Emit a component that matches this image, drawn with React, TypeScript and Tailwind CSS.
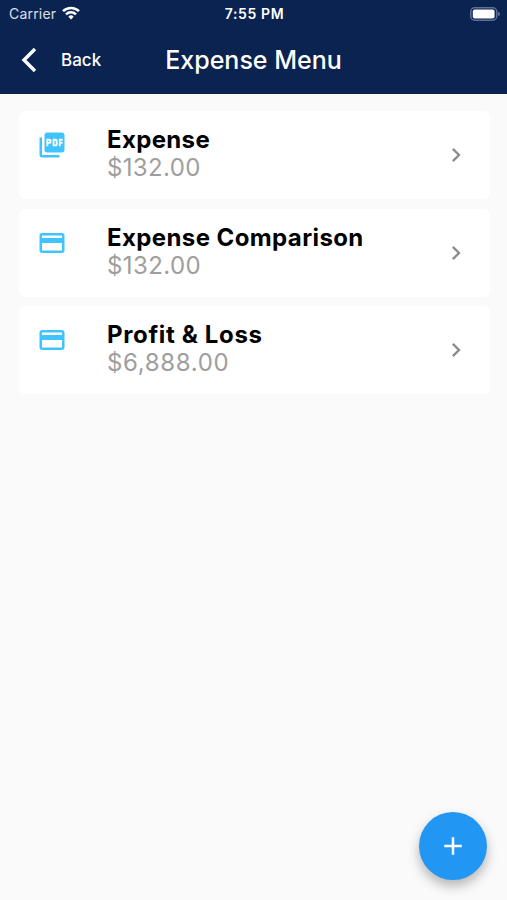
import React from 'react';
import { MdPictureAsPdf, MdCreditCard, MdChevronRight, MdAdd } from 'react-icons/md';
import type { IconType } from 'react-icons';

interface MenuItem {
  title: string;
  amount: string;
  icon: IconType;
  textClass: string;
}

const items: MenuItem[] = [
  { title: 'Expense', amount: '$132.00', icon: MdPictureAsPdf, textClass: 'tracking-[0.35px]' },
  { title: 'Expense Comparison', amount: '$132.00', icon: MdCreditCard, textClass: 'tracking-[0.4px]' },
  { title: 'Profit & Loss', amount: '$6,888.00', icon: MdCreditCard, textClass: 'tracking-[0.65px]' },
];

function StatusBar() {
  return (
    <div className="h-[27px] grid grid-cols-3 items-center pl-[9px] pr-[7px] text-[14px]">
      <div className="flex items-center gap-[6px]">
        <span className="tracking-[0.2px] text-white/85">Carrier</span>
        <svg className="mb-[2px]" width="18" height="14" viewBox="0 0 18 14" fill="none" stroke="white" strokeWidth="2.5">
          <path d="M1 5.2a11.3 11.3 0 0 1 16 0" />
          <path d="M4 8.4a7 7 0 0 1 10 0" />
          <path d="M9 13.5l-2.7-2.8a3.8 3.8 0 0 1 5.4 0z" fill="white" stroke="none" />
        </svg>
      </div>
      <span className="text-center font-semibold tracking-[0.6px] whitespace-nowrap">7:55 PM</span>
      <svg className="justify-self-end" width="30" height="14" viewBox="0 0 30 14" fill="none">
        <rect x="0.75" y="0.75" width="26" height="12.5" rx="4" stroke="#5f6f95" strokeWidth="1.5" />
        <rect x="2.8" y="2.5" width="21.8" height="9" rx="2" fill="white" />
        <path d="M28 5v4a2 2 0 0 0 0-4z" fill="#5f6f95" />
      </svg>
    </div>
  );
}

function MenuCard({ title, amount, icon: Icon, textClass }: MenuItem) {
  return (
    <button className="h-[88px] w-full rounded-md bg-white flex text-left pl-[18px] pr-[20px]">
      <Icon size={30} className="text-[#40c4ff] mt-[19px] shrink-0" />
      <div className={`ml-[40px] mt-[15px] flex-1 text-[24px] leading-[28px] ${textClass}`}>
        <div className="font-bold text-black">{title}</div>
        <div className="text-[#9e9e9e]">{amount}</div>
      </div>
      <MdChevronRight size={28} className="text-[#8c8c8c] self-center" />
    </button>
  );
}

export default function App() {
  return (
    <div className="h-screen flex flex-col bg-[#fafafa] font-['Inter',sans-serif] overflow-hidden">
      <header className="h-[94px] bg-[#0a2351] text-white shrink-0">
        <StatusBar />
        <div className="h-[66px] grid grid-cols-[1fr_auto_1fr] items-center">
          <button className="flex items-center pl-[21px] gap-[24px] text-[17px] font-medium">
            <svg width="16" height="26" viewBox="0 0 16 26" fill="none" stroke="white" strokeWidth="3.4">
              <path d="M14 2L3 13l11 11" />
            </svg>
            <span className="pt-[2px]">Back</span>
          </button>
          <h1 className="pt-[2px] text-[25px] font-medium">Expense Menu</h1>
        </div>
      </header>
      <main className="flex-1 flex flex-col gap-[9.7px] pt-[17px] pl-[19px] pr-[17px]">
        {items.map((item) => (
          <MenuCard key={item.title} {...item} />
        ))}
      </main>
      <button className="size-[68px] mr-[20px] mb-[20px] self-end rounded-full bg-[#2196f3] text-white flex items-center justify-center shadow-[0_6px_12px_rgba(0,0,0,0.28)]">
        <MdAdd size={30} />
      </button>
    </div>
  );
}
